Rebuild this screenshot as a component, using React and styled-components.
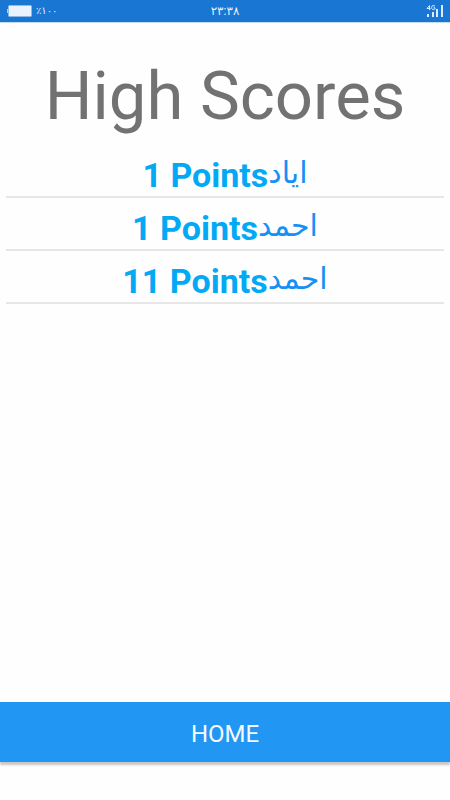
import React from "react";
import styled, { createGlobalStyle } from "styled-components";

const GlobalStyle = createGlobalStyle`
  * { box-sizing: border-box; }
  body { margin: 0; background: #fefefe; font-family: Roboto, "DejaVu Sans", sans-serif; }
`;

const Screen = styled.div`
  display: flex;
  flex-direction: column;
  min-height: 100vh;
`;

const StatusBar = styled.header`
  display: grid;
  grid-template-columns: 1fr auto 1fr;
  align-items: center;
  height: 23px;
  padding: 0 7px;
  background: #1976d2;
  border-bottom: 1px solid #c5dcf3;
  color: #e6f1fc;
  line-height: 12px;
`;

const Battery = styled.div`
  display: flex;
  align-items: center;
  gap: 3px;
`;

const Percent = styled.bdo`
  font-size: 10px;
`;

const Clock = styled.bdo`
  font-size: 12px;
`;

const Signal = styled.svg`
  justify-self: end;
`;

const Content = styled.main`
  flex: 1;
  padding: 33px 6px 0;
`;

const Title = styled.h1`
  margin: 0;
  color: #727272;
  font-size: 67px;
  font-weight: 400;
  line-height: 80px;
  text-align: center;
  white-space: nowrap;
`;

const ScoreList = styled.ul`
  margin: 9px 0 0;
  padding: 0;
  list-style: none;
`;

const ScoreRow = styled.li`
  display: flex;
  justify-content: center;
  align-items: flex-start;
  height: 53px;
  padding-top: 10px;
  border-bottom: 2px solid #e6e6e6;
`;

const Points = styled.strong`
  color: #03a9f4;
  font-size: 34px;
  font-weight: 700;
  line-height: 40px;
`;

const Player = styled.span`
  color: #1590f5;
  font-family: "DejaVu Sans", sans-serif;
  font-size: 30px;
  line-height: 36px;
`;

const HomeButton = styled.button`
  height: 60px;
  margin-bottom: 38px;
  padding: 4px 0 0;
  border: 0;
  background: #2196f3;
  box-shadow: 0 3px 2px rgba(0, 0, 0, 0.22);
  color: #f4faff;
  font-family: Roboto, sans-serif;
  font-size: 24px;
  line-height: 28px;
`;

const scores = [
  { points: 1, player: "اياد" },
  { points: 1, player: "احمد" },
  { points: 11, player: "احمد" },
];

export default function App() {
  return (
    <>
      <GlobalStyle />
      <Screen>
        <StatusBar>
          <Battery>
            <svg width="26" height="14" viewBox="0 0 26 14" aria-hidden="true">
              <rect x="0" y="5" width="2" height="4" fill="#a9ccf1" />
              <rect x="1.5" y="1.5" width="23" height="11" rx="1" fill="#eaf3fc" stroke="#8fb8ea" />
            </svg>
            <Percent dir="ltr">٪١٠٠</Percent>
          </Battery>
          <Clock dir="ltr">٢٣:٣٨</Clock>
          <Signal width="17" height="14" viewBox="0 0 17 14" aria-label="4G signal">
            <path
              d="M3.5 6V1.5L1 4.5H4.5M9 2.3C8 1 5.6 1.2 5.6 3.5C5.6 6 8 6 9 5V3.8H7.5"
              fill="none"
              stroke="#dcebfa"
            />
            <path d="M1 10h2v3H1zM6 8h2v5H6zM10 5h2v8h-2zM15 1h2v12h-2z" fill="#dcebfa" />
          </Signal>
        </StatusBar>
        <Content>
          <Title>High Scores</Title>
          <ScoreList>
            {scores.map(({ points, player }, index) => (
              <ScoreRow key={index}>
                <Points>{points} Points</Points>
                <Player lang="ar">{player}</Player>
              </ScoreRow>
            ))}
          </ScoreList>
        </Content>
        <HomeButton type="button">HOME</HomeButton>
      </Screen>
    </>
  );
}
